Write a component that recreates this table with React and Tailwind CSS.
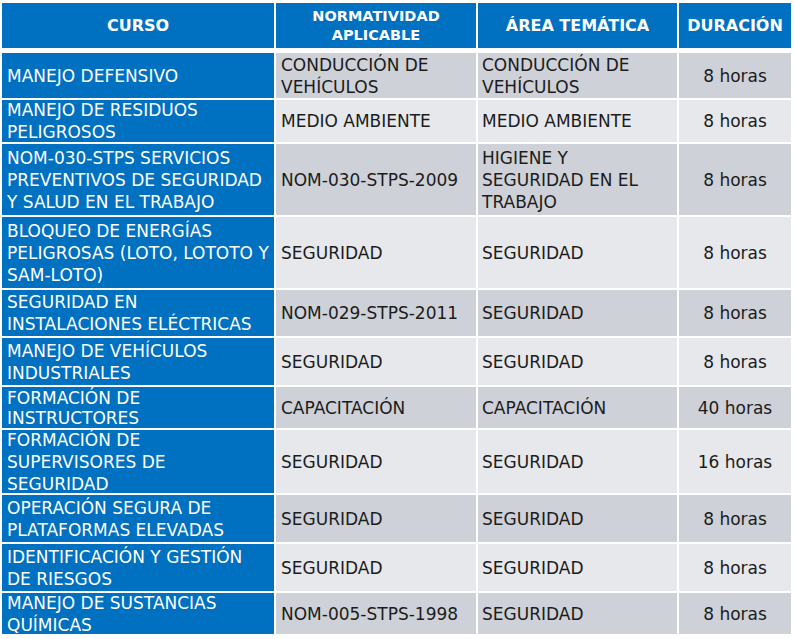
const rows = [
    {
        h: "h-[45px]", dark: true,
        curso: ["MANEJO DEFENSIVO"],
        norma: ["CONDUCCIÓN DE", "VEHÍCULOS"],
        area: ["CONDUCCIÓN DE", "VEHÍCULOS"],
        duracion: "8 horas",
    },
    {
        h: "h-[42px]", dark: false,
        curso: ["MANEJO DE RESIDUOS", "PELIGROSOS"],
        norma: ["MEDIO AMBIENTE"],
        area: ["MEDIO AMBIENTE"],
        duracion: "8 horas",
    },
    {
        h: "h-[71px]", dark: true,
        curso: ["NOM-030-STPS SERVICIOS", "PREVENTIVOS DE SEGURIDAD", "Y SALUD EN EL TRABAJO"],
        norma: ["NOM-030-STPS-2009"],
        area: ["HIGIENE Y", "SEGURIDAD EN EL", "TRABAJO"],
        duracion: "8 horas",
    },
    {
        h: "h-[71px]", dark: false,
        curso: ["BLOQUEO DE ENERGÍAS", "PELIGROSAS (LOTO, LOTOTO Y", "SAM-LOTO)"],
        norma: ["SEGURIDAD"],
        area: ["SEGURIDAD"],
        duracion: "8 horas",
    },
    {
        h: "h-[46px]", dark: true,
        curso: ["SEGURIDAD EN", "INSTALACIONES ELÉCTRICAS"],
        norma: ["NOM-029-STPS-2011"],
        area: ["SEGURIDAD"],
        duracion: "8 horas",
    },
    {
        h: "h-[47px]", dark: false,
        curso: ["MANEJO DE VEHÍCULOS", "INDUSTRIALES"],
        norma: ["SEGURIDAD"],
        area: ["SEGURIDAD"],
        duracion: "8 horas",
    },
    {
        h: "h-[41px]", dark: true, tight: true,
        curso: ["FORMACIÓN DE", "INSTRUCTORES"],
        norma: ["CAPACITACIÓN"],
        area: ["CAPACITACIÓN"],
        duracion: "40 horas",
    },
    {
        h: "h-[63px]", dark: false,
        curso: ["FORMACIÓN DE", "SUPERVISORES DE", "SEGURIDAD"],
        norma: ["SEGURIDAD"],
        area: ["SEGURIDAD"],
        duracion: "16 horas",
    },
    {
        h: "h-[47px]", dark: true,
        curso: ["OPERACIÓN SEGURA DE", "PLATAFORMAS ELEVADAS"],
        norma: ["SEGURIDAD"],
        area: ["SEGURIDAD"],
        duracion: "8 horas",
    },
    {
        h: "h-[47px]", dark: false,
        curso: ["IDENTIFICACIÓN Y GESTIÓN", "DE RIESGOS"],
        norma: ["SEGURIDAD"],
        area: ["SEGURIDAD"],
        duracion: "8 horas",
    },
    {
        h: "h-[41px]", dark: true,
        curso: ["MANEJO DE SUSTANCIAS", "QUÍMICAS"],
        norma: ["NOM-005-STPS-1998"],
        area: ["SEGURIDAD"],
        duracion: "8 horas",
    },
]

const Lines = ({ lines }) => (
    <div className="whitespace-nowrap">
        {lines.map((l, i) => <div key={i}>{l}</div>)}
    </div>
)

const App = () => {
    return (
        <div className="min-h-screen bg-white pt-[3px] pl-[2px] font-['DejaVu_Sans',sans-serif]">
            {/* encabezado */}
            <div className="grid grid-cols-[272px_200px_199px_112px] gap-x-[2px] h-[45px] text-white font-bold">
                <div className="bg-[#0070c0] flex items-center justify-center text-[16px]">CURSO</div>
                <div className="bg-[#0070c0] flex items-center justify-center text-center text-[14.5px] leading-[19px]">
                    NORMATIVIDAD<br />APLICABLE
                </div>
                <div className="bg-[#0070c0] flex items-center justify-center text-[16px]">ÁREA TEMÁTICA</div>
                <div className="bg-[#0070c0] flex items-center justify-center text-[16px]">DURACIÓN</div>
            </div>

            <div className="mt-[5px] flex flex-col gap-y-[2px] text-[17px]">
                {rows.map((row, idx) => {
                    const bg = row.dark ? "bg-[#ced1d7]" : "bg-[#e6e8eb]"
                    return (
                        <div
                            key={idx}
                            className={`grid grid-cols-[272px_200px_199px_112px] gap-x-[2px] overflow-hidden ${row.h} ${row.tight ? "leading-[20px]" : "leading-[22px]"}`}
                        >
                            <div className="bg-[#0070c0] text-white flex items-center pl-[5px] overflow-hidden">
                                <Lines lines={row.curso} />
                            </div>
                            <div className={`${bg} text-[#1c1c1c] flex items-center pl-[5px] overflow-hidden`}>
                                <Lines lines={row.norma} />
                            </div>
                            <div className={`${bg} text-[#1c1c1c] flex items-center pl-[4px] overflow-hidden`}>
                                <Lines lines={row.area} />
                            </div>
                            <div className={`${bg} text-[#1c1c1c] flex items-center justify-center overflow-hidden`}>
                                {row.duracion}
                            </div>
                        </div>
                    )
                })}
            </div>
        </div>
    )
}

export default App
